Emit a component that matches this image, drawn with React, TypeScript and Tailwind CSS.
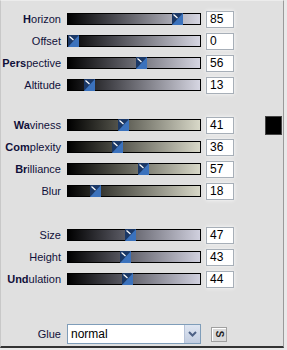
import React from "react";

type Row = { label: React.ReactNode; value: number };
type Group = { rows: Row[]; track: string; top: string };

const groups: Group[] = [
  {
    top: "mt-[7px]",
    track: "bg-[linear-gradient(to_right,#000000,#4a4a50_35%,#d6d6e2)]",
    rows: [
      { label: <><b>H</b>orizon</>, value: 85 },
      { label: "Offset", value: 0 },
      { label: <><b>Pers</b>pective</>, value: 56 },
      { label: "Altitude", value: 13 },
    ],
  },
  {
    top: "mt-[18px]",
    track: "bg-[linear-gradient(to_right,#000000,#4c4c44_35%,#d8d8c8)]",
    rows: [
      { label: <><b>Wa</b>viness</>, value: 41 },
      { label: <><b>Com</b>plexity</>, value: 36 },
      { label: <><b>Br</b>illiance</>, value: 57 },
      { label: "Blur", value: 18 },
    ],
  },
  {
    top: "mt-[22px]",
    track: "bg-[linear-gradient(to_right,#000000,#4a4a52_35%,#d0d0de)]",
    rows: [
      { label: "Size", value: 47 },
      { label: "Height", value: 43 },
      { label: <><b>Und</b>ulation</>, value: 44 },
    ],
  },
];

function Thumb() {
  return (
    <svg width="11" height="12" viewBox="0 0 11 12" className="block">
      <rect x="0" y="0" width="11" height="12" fill="#1b3866" />
      <polygon points="11,0 11,12 0,12" fill="#3b72bd" />
      <line x1="1.5" y1="1.5" x2="5.5" y2="5" stroke="#ffffff" strokeWidth="1.2" />
    </svg>
  );
}

function Slider({ value, track }: { value: number; track: string }) {
  const left = Math.round((value / 100) * 122);
  return (
    <div className={`relative w-[134px] h-[12px] border border-black ${track}`}>
      <div className="absolute top-[-1px]" style={{ left }}>
        <Thumb />
      </div>
    </div>
  );
}

function NumBox({ value }: { value: number }) {
  return (
    <div className="w-[28px] h-[17px] bg-white border border-[#a7afb8] pl-[3px] text-[12px] leading-[15px] text-black shadow-[0_0_4px_rgba(255,255,255,0.9)]">
      {value}
    </div>
  );
}

export default function App() {
  return (
    <div
      className="w-[287px] h-[350px] bg-[#e9e9e9] text-[#10103a]"
      style={{ fontFamily: '"Liberation Sans", Arial, sans-serif' }}
    >
      <div className="w-[284px] h-[348px] bg-[#e0e0e0] border-l border-t border-l-[#c8c8c8] border-t-[#ececec] border-r border-r-[#9a9a9a] border-b-2 border-b-[#333333] flex flex-col">
        {groups.map((g, gi) => (
          <div key={gi} className={`flex flex-col ${g.top}`}>
            {g.rows.map((r, ri) => (
              <div key={ri} className="flex items-center h-[22px]">
                <div className="w-[60px] text-right text-[11px] whitespace-nowrap">{r.label}</div>
                <div className="ml-[6px]">
                  <Slider value={r.value} track={g.track} />
                </div>
                <div className="ml-[5px]">
                  <NumBox value={r.value} />
                </div>
                {gi === 1 && ri === 0 && (
                  <div className="ml-[31px] w-[17px] h-[19px] bg-black border border-[#444]" />
                )}
              </div>
            ))}
          </div>
        ))}
        <div className="flex items-center mt-[34px] h-[20px]">
          <div className="w-[60px] text-right text-[11px]">Glue</div>
          <div className="ml-[6px] w-[134px] h-[20px] bg-white border border-[#7f9db9] flex items-center">
            <span className="pl-[3px] text-[12px] text-black flex-1">normal</span>
            <div className="w-[16px] h-[18px] bg-[linear-gradient(to_bottom,#dfe6f2,#c2cde0)] border-l border-[#b7c3d8] flex items-center justify-center">
              <svg width="9" height="6" viewBox="0 0 9 6">
                <polyline points="1,1 4.5,4.5 8,1" fill="none" stroke="#4d6185" strokeWidth="2" />
              </svg>
            </div>
          </div>
          <div className="ml-[10px] w-[16px] h-[15px] bg-[#dadada] border border-[#a0a0a0] shadow-[1px_1px_0_#ffffff_inset] flex items-center justify-center text-[10px] font-bold leading-none text-[#222]">
            <span className="inline-block rotate-90">S</span>
          </div>
        </div>
      </div>
    </div>
  );
}
